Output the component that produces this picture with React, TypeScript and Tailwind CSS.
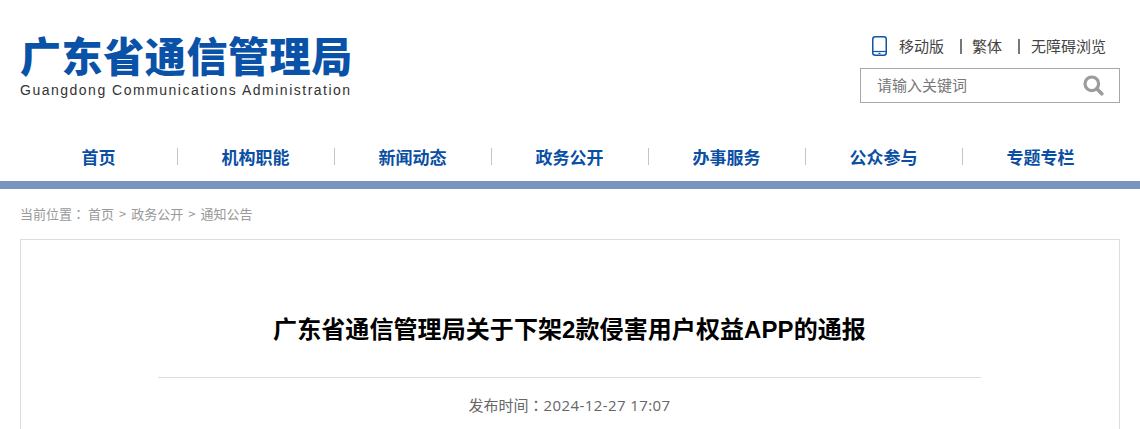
const cjk = { fontFamily: '"Noto Sans CJK SC", sans-serif' };

const navItems = ["首页", "机构职能", "新闻动态", "政务公开", "办事服务", "公众参与", "专题专栏"];

function PhoneIcon() {
  return (
    <svg width="15" height="20" viewBox="0 0 15 20" fill="none">
      <rect x="0.75" y="0.75" width="13.5" height="18.5" rx="2.5" stroke="#0f55a8" strokeWidth="1.5" />
      <path d="M1 15.5h13" stroke="#0f55a8" strokeWidth="1.2" />
      <rect x="6.5" y="16.8" width="2" height="1.2" fill="#0f55a8" />
    </svg>
  );
}

function SearchIcon() {
  return (
    <svg width="21" height="21" viewBox="0 0 21 21" fill="none">
      <circle cx="8.8" cy="8.8" r="6.8" stroke="#9c9c9c" strokeWidth="3.2" />
      <path d="M13.8 13.8l5 5" stroke="#9c9c9c" strokeWidth="3.6" strokeLinecap="round" />
    </svg>
  );
}

export default function App() {
  return (
    <div className="h-[429px] w-[1140px] overflow-hidden bg-white" style={cjk}>
      <header className="mx-auto flex h-[131px] w-[1100px] justify-between">
        <div className="pt-[29px]">
          <div className="h-[50px] text-[41px] leading-[50px] font-black tracking-[0.6px] whitespace-nowrap text-[#0a52a8]">
            广东省通信管理局
          </div>
          <div className="mt-[2px] font-['Liberation_Sans',sans-serif] text-[14px] leading-[18px] tracking-[1.5px] whitespace-nowrap text-[#333]">
            Guangdong Communications Administration
          </div>
        </div>
        <div className="flex w-[260px] flex-col pt-[36px]">
          <div className="flex h-[20px] items-center pl-[12px] text-[15px] text-[#444]">
            <PhoneIcon />
            <span className="ml-[12px]">移动版</span>
            <span className="mr-[10px] ml-[16px] h-[15px] w-[2px] bg-[#777]" />
            <span>繁体</span>
            <span className="mr-[11px] ml-[16px] h-[15px] w-[2px] bg-[#777]" />
            <span>无障碍浏览</span>
          </div>
          <div className="mt-[12px] flex h-[35px] w-[260px] items-center justify-between border border-[#a8a8a8] pr-[15px] pl-[16px]">
            <span className="pb-[2px] text-[15px] leading-[20px] text-[#777]">请输入关键词</span>
            <SearchIcon />
          </div>
        </div>
      </header>

      <nav className="mx-auto flex h-[50px] w-[1100px] items-start">
        {navItems.map((item, i) => (
          <div key={item} className="relative flex h-[36px] w-[157px] items-center justify-center pt-[18px] pb-[2px]">
            <a className="text-[17px] font-bold text-[#0a4fa3]">{item}</a>
            {i < navItems.length - 1 && (
              <span className="absolute top-[17px] -right-px h-[17px] w-px bg-[#c4c4c4]" />
            )}
          </div>
        ))}
      </nav>
      <div className="h-[8px] bg-[#7896bf]" />

      <div className="mx-auto w-[1100px]">
        <div className="flex h-[50px] items-center text-[13px] whitespace-pre text-[#999]">
          <span>当前位置</span>
          <span className="font-['Noto_Sans_CJK_TC',sans-serif]">：</span>
          <span className="ml-[3px]">首页</span>
          <span className="mx-[5px]">&gt;</span>
          <span>政务公开</span>
          <span className="mx-[5px]">&gt;</span>
          <span>通知公告</span>
        </div>
        <div className="h-[300px] border border-[#ddd] pr-[138px] pl-[137px]">
          <h1 className="pt-[72px] text-center font-['Liberation_Sans','Noto_Sans_CJK_SC',sans-serif] text-[24px] leading-[36px] font-bold tracking-[0.08px] text-black">
            广东省通信管理局关于下架2款侵害用户权益APP的通报
          </h1>
          <div className="mt-[29px] border-t border-[#ddd] pt-[16px] text-center font-['Open_Sans','Noto_Sans_CJK_SC',sans-serif] text-[15px] leading-[22px] text-[#666]">
            发布时间<span className="font-['Noto_Sans_CJK_TC',sans-serif]">：</span>
            <span className="tracking-[0.4px]">2024-12-27 17:07</span>
          </div>
        </div>
      </div>
    </div>
  );
}
